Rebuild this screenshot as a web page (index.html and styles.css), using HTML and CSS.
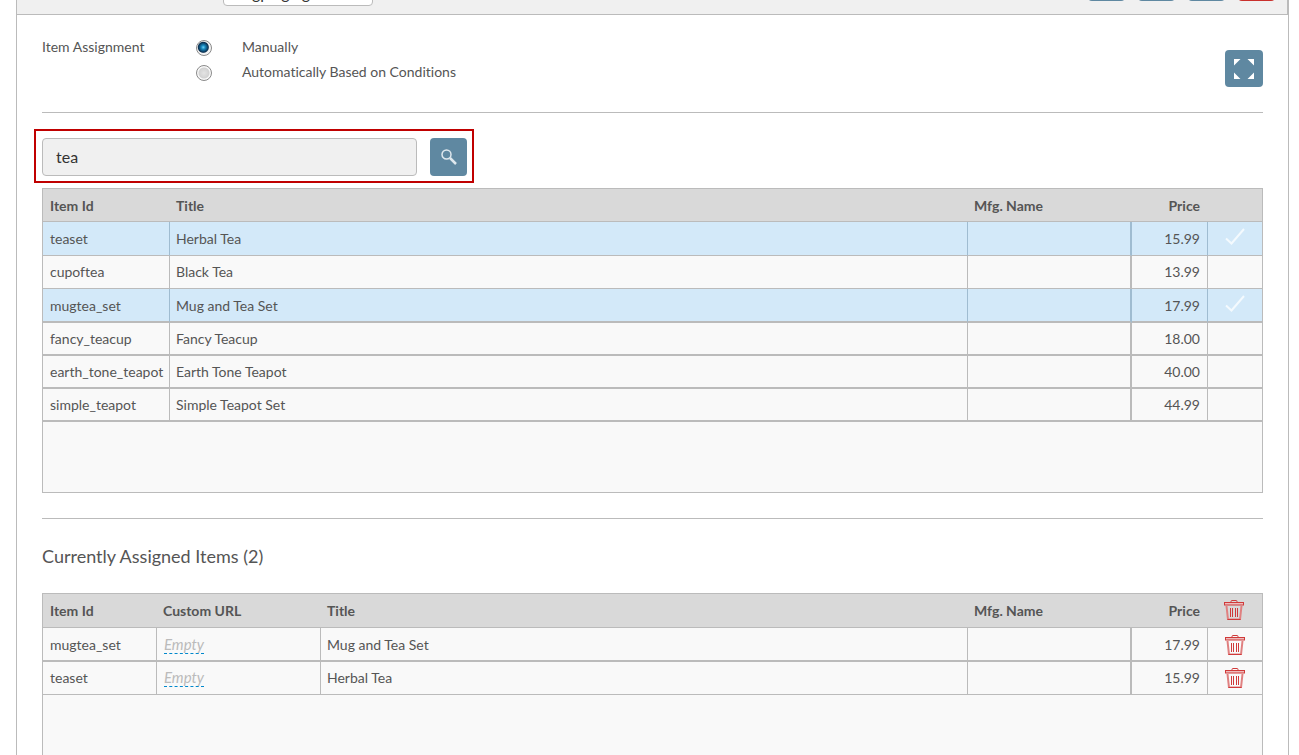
FILE: index.html
```html
<!DOCTYPE html>
<html lang="en">
<head>
<meta charset="utf-8">
<title>Item Assignment</title>
<link rel="stylesheet" href="styles.css">
</head>
<body>
<svg class="sprite" aria-hidden="true">
  <symbol id="trash" viewBox="0 0 20 20">
    <g fill="none" stroke="#d03a3a">
      <path d="M7 2.500V1.500Q7 .5 8 .5H12Q13 .5 13 1.500V2.500"/>
      <rect x=".5" y="2.500" width="19" height="2.500" fill="#eebcbc"/>
      <path d="M2.500 6L4 19.500H16L17.500 6" stroke="#e08080" stroke-width="2"/>
      <path d="M3.500 19.500H16.500"/>
      <path d="M6.500 8V17M8.500 8V17M11.500 8V17M13.500 8V17"/>
    </g>
  </symbol>
  <symbol id="check" viewBox="0 0 20 17">
    <path d="M1 10.500L6.500 15.500L19 1" fill="none" stroke="#f4fafe" stroke-width="2"/>
  </symbol>
</svg>
<main class="panel">
  <header class="panel-head">
    <input class="field name-field" type="text" aria-label="Name" value="gp ag ag">
    <div class="actions">
      <button class="btn" aria-label="Edit"></button>
      <button class="btn" aria-label="Copy"></button>
      <button class="btn" aria-label="Save"></button>
      <button class="btn btn-danger" aria-label="Delete"></button>
    </div>
  </header>
  <div class="panel-body">
    <section class="assignment">
      <span class="assignment-label">Item Assignment</span>
      <div class="options">
        <label class="option"><input type="radio" name="mode" checked>Manually</label>
        <label class="option"><input type="radio" name="mode">Automatically Based on Conditions</label>
      </div>
      <button class="btn" aria-label="Full screen">
        <svg width="20" height="20" viewBox="0 0 20 20" fill="#fff"><path d="M0 0H6.500L0 6.500ZM13.500 0H20V6.500ZM0 13.500L6.500 20H0ZM20 13.500V20H13.500Z"/></svg>
      </button>
    </section>

    <form class="search">
      <input class="field search-field" type="text" aria-label="Search items" value="tea">
      <button class="btn" type="button" aria-label="Search">
        <svg width="16" height="16" viewBox="0 0 16 16" fill="none" stroke="#dfe8ee"><circle cx="5.500" cy="5.500" r="4.500" stroke-width="1.500"/><path d="M9 9L15 15" stroke-width="2.500"/></svg>
      </button>
    </form>

    <div class="grid results">
      <table>
        <colgroup><col class="c-id"><col><col class="c-mfg"><col class="c-price"><col class="c-act"></colgroup>
        <thead><tr><th>Item Id</th><th>Title</th><th>Mfg. Name</th><th class="num">Price</th><th></th></tr></thead>
        <tbody>
          <tr class="selected"><td>teaset</td><td>Herbal Tea</td><td></td><td class="num">15.99</td><td class="act"><svg class="tick"><use href="#check"/></svg></td></tr>
          <tr><td>cupoftea</td><td>Black Tea</td><td></td><td class="num">13.99</td><td></td></tr>
          <tr class="selected thick"><td>mugtea_set</td><td>Mug and Tea Set</td><td></td><td class="num">17.99</td><td class="act"><svg class="tick"><use href="#check"/></svg></td></tr>
          <tr class="thick"><td>fancy_teacup</td><td>Fancy Teacup</td><td></td><td class="num">18.00</td><td></td></tr>
          <tr class="thick"><td>earth_tone_teapot</td><td>Earth Tone Teapot</td><td></td><td class="num">40.00</td><td></td></tr>
          <tr class="thick"><td>simple_teapot</td><td>Simple Teapot Set</td><td></td><td class="num">44.99</td><td></td></tr>
        </tbody>
      </table>
    </div>

    <h2>Currently Assigned Items (2)</h2>

    <div class="grid assigned">
      <table>
        <colgroup><col class="c-id-short"><col class="c-url"><col><col class="c-mfg"><col class="c-price"><col class="c-act"></colgroup>
        <thead><tr><th>Item Id</th><th>Custom URL</th><th>Title</th><th>Mfg. Name</th><th class="num">Price</th><th class="act"><button class="remove" aria-label="Remove all"><svg><use href="#trash"/></svg></button></th></tr></thead>
        <tbody>
          <tr class="thick tall"><td>mugtea_set</td><td><a class="empty" href="#">Empty</a></td><td>Mug and Tea Set</td><td></td><td class="num">17.99</td><td class="act"><button class="remove" aria-label="Remove mugtea_set"><svg><use href="#trash"/></svg></button></td></tr>
          <tr><td>teaset</td><td><a class="empty" href="#">Empty</a></td><td>Herbal Tea</td><td></td><td class="num">15.99</td><td class="act"><button class="remove" aria-label="Remove teaset"><svg><use href="#trash"/></svg></button></td></tr>
        </tbody>
      </table>
    </div>
  </div>
</main>
</body>
</html>
```
FILE: styles.css
```css
* { box-sizing: border-box; }
html { overflow: hidden; }
body {
  margin: 0;
  height: 100vh;
  overflow: hidden;
  background: #fff;
  color: #555;
  font: 14px/20px Lato, sans-serif;
  font-variant-ligatures: none;
}
.sprite { display: none; }
svg { display: block; }

.panel {
  margin: 0 10px 0 16px;
  min-height: 100vh;
  border: solid #bbb;
  border-width: 0 1px;
}
.panel-head {
  display: flex;
  justify-content: space-between;
  align-items: flex-end;
  height: 15px;
  padding: 0 12px 0 206px;
  overflow: hidden;
  background: #f0f0f0;
  border: solid #bbb;
  border-width: 0 1px 1px 0;
}
.panel-body { padding: 0 25px; }

.field {
  height: 38px;
  border: 1px solid #bbb;
  border-radius: 4px;
  background: #f0f0f0;
  color: #333;
  font: 16px/20px Lato, sans-serif;
  padding: 0 13px 2px;
}
.name-field { width: 150px; margin-bottom: 8px; background: #fff; padding: 10px 28px 0; }
.actions { display: flex; gap: 13px; margin-bottom: 13px; }

.btn {
  display: flex;
  align-items: center;
  justify-content: center;
  width: 37px;
  height: 38px;
  padding: 0;
  border: 0;
  border-radius: 4px;
  background: #5f88a1;
}
.btn-danger { background: #c9302c; }

.assignment {
  display: flex;
  align-items: flex-start;
  padding: 22px 0 25px;
  border-bottom: 1px solid #bbb;
}
.assignment-label { width: 154px; }
.options {
  display: flex;
  flex-direction: column;
  gap: 5px;
  flex: 1;
  margin-bottom: 5px;
}
.option { display: flex; align-items: center; gap: 30px; }
.option input {
  appearance: none;
  width: 16px;
  height: 16px;
  margin: 2px 0 0;
  border: 1px solid #8a8a8a;
  border-radius: 50%;
  background: radial-gradient(circle at 50% 50%, #e4e4e4, #d2d2d2 5px, #f8f8f8 6px);
}
.option input:checked {
  background: radial-gradient(circle at 45% 45%, #6ed0f5 0, #1787bd 2px, #0b2f50 5px, #f4f4f4 6px);
}
.assignment .btn { width: 38px; height: 37px; margin-top: 13px; }

.search {
  display: flex;
  gap: 13px;
  width: 440px;
  max-width: 100%;
  margin: 16px -8px 5px;
  padding: 7px 5px 5px 6px;
  border: 2px solid #c00000;
}
.search-field { flex: 1; min-width: 0; }

.grid { border: 1px solid #bbb; background: #f9f9f9; }
.results { min-height: 305px; }
.assigned { min-height: 305px; }
table {
  width: 100%;
  table-layout: fixed;
  border-collapse: separate;
  border-spacing: 0;
}
.c-id { width: 127px; }
.c-id-short { width: 114px; }
.c-url { width: 164px; }
.c-mfg { width: 164px; }
.c-price { width: 76px; }
.c-act { width: 54px; }
th, td {
  height: 33px;
  padding: 0 6px;
  border-bottom: 1px solid #bbb;
  text-align: left;
  white-space: nowrap;
}
th { background: #d9d9d9; font-weight: 700; }
.results th { padding-top: 2px; }
td { border-right: 1px solid #bbb; }
th:first-child, td:first-child { padding-left: 7px; }
td:last-child { border-right: 0; }
td:nth-last-child(3) { border-right-width: 2px; }
td.num { padding-right: 7px; text-align: right; }
th.num { padding-right: 8px; text-align: right; }
.thick td { border-bottom-width: 2px; }
.selected td { height: 34px; background: #d3e9f9; border-right-color: #9fbcd1; }
.selected.thick td, .tall td { padding-top: 1px; }
.assigned th, .tall td { height: 34px; }
td.act { padding-left: 17px; }
th.act { padding: 0 16px 2px; }
.tick { width: 20px; height: 17px; margin-bottom: 4px; }
.remove { display: block; width: 20px; height: 20px; padding: 0; border: 0; background: none; }
.remove svg { width: 20px; height: 20px; }
.empty {
  display: inline-block;
  margin-left: 1px;
  border-bottom: 1px dashed #08c;
  color: #bbb;
  font-size: 15px;
  font-style: italic;
  line-height: 17px;
  text-decoration: none;
}

h2 {
  margin: 25px 0;
  padding-top: 26px;
  border-top: 1px solid #bbb;
  font-size: 18px;
  font-weight: 400;
  line-height: 23px;
}
```
